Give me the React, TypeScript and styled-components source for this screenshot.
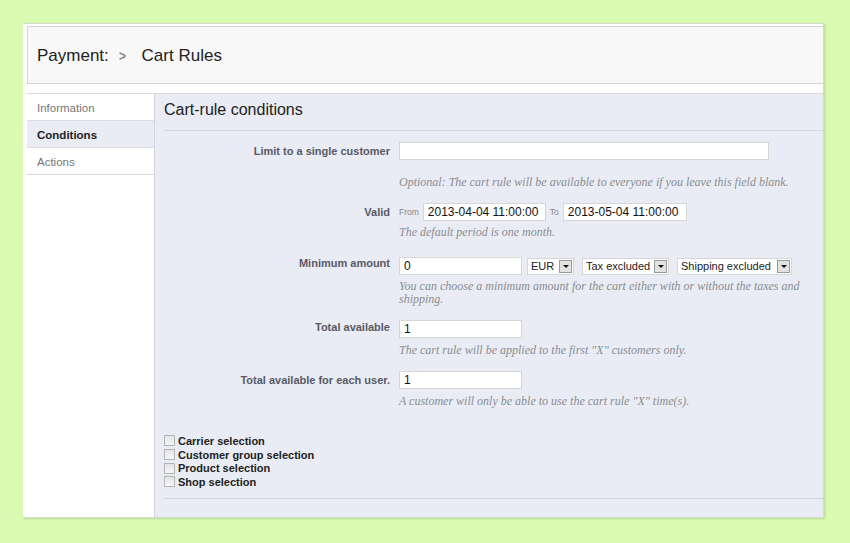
import styled, { createGlobalStyle } from "styled-components";

const GlobalStyle = createGlobalStyle`
  body {
    margin: 0;
    background: #d9fbb1;
    font-family: "Liberation Sans", Arial, sans-serif;
  }
`;

export default function App() {
  return (
    <>
      <GlobalStyle />
      <Page>
        <Card>
          <Header>
            <Crumb>Payment:</Crumb>
            <Chevron>&gt;</Chevron>
            <Crumb>Cart Rules</Crumb>
          </Header>
          <Body>
            <Tabs>
              <Tab>Information</Tab>
              <Tab $active>Conditions</Tab>
              <Tab>Actions</Tab>
            </Tabs>
            <Panel>
              <PanelTitle>Cart-rule conditions</PanelTitle>

              <FieldRow $top={11}>
                <Label>Limit to a single customer</Label>
                <Field>
                  <Controls>
                    <TextInput $width={370} />
                  </Controls>
                  <Hint $top={16}>
                    Optional: The cart rule will be available to everyone if you leave this field blank.
                  </Hint>
                </Field>
              </FieldRow>

              <FieldRow $top={14}>
                <Label>Valid</Label>
                <Field>
                  <Controls>
                    <Small>From</Small>
                    <TextInput $width={123} defaultValue="2013-04-04 11:00:00" />
                    <Small>To</Small>
                    <TextInput $width={124} defaultValue="2013-05-04 11:00:00" />
                  </Controls>
                  <Hint $top={5}>The default period is one month.</Hint>
                </Field>
              </FieldRow>

              <FieldRow $top={18}>
                <Label $lift={3}>Minimum amount</Label>
                <Field>
                  <Controls $gap={5}>
                    <TextInput $width={123} defaultValue="0" />
                    <Select $width={47}>EUR<DropButton /></Select>
                    <Select $width={87} $left={3}>Tax excluded<DropButton /></Select>
                    <Select $width={115} $left={3}>Shipping excluded<DropButton /></Select>
                  </Controls>
                  <Hint $top={5}>
                    You can choose a minimum amount for the cart either with or without the taxes and shipping.
                  </Hint>
                </Field>
              </FieldRow>

              <FieldRow $top={14}>
                <Label $lift={2}>Total available</Label>
                <Field>
                  <Controls>
                    <TextInput $width={123} defaultValue="1" />
                  </Controls>
                  <Hint $top={6}>The cart rule will be applied to the first "X" customers only.</Hint>
                </Field>
              </FieldRow>

              <FieldRow $top={14}>
                <Label>Total available for each user.</Label>
                <Field>
                  <Controls>
                    <TextInput $width={123} defaultValue="1" />
                  </Controls>
                  <Hint $top={6}>A customer will only be able to use the cart rule "X" time(s).</Hint>
                </Field>
              </FieldRow>

              <Checks>
                {["Carrier selection", "Customer group selection", "Product selection", "Shop selection"].map((t) => (
                  <CheckRow key={t}>
                    <Box />
                    {t}
                  </CheckRow>
                ))}
              </Checks>
              <BottomRule />
            </Panel>
          </Body>
        </Card>
      </Page>
    </>
  );
}

const Page = styled.div`
  width: 850px;
  height: 543px;
  padding: 23px 0 0 23px;
  box-sizing: border-box;
`;

const Card = styled.div`
  width: 801px;
  height: 495px;
  background: #fff;
  box-sizing: border-box;
  border: 1px solid #d4dccc;
  border-left: none;
  padding: 2px 0 0 4px;
  display: flex;
  flex-direction: column;
  box-shadow: 1px 1px 2px rgba(120, 150, 100, 0.35);
`;

const Header = styled.div`
  height: 58px;
  background: #f8f8f8;
  border: 1px solid #d3d3d3;
  border-right: none;
  display: flex;
  align-items: center;
  padding-left: 9px;
  padding-top: 1px;
  box-sizing: border-box;
`;

const Crumb = styled.span`
  font-size: 17px;
  color: #222;
`;

const Chevron = styled.span`
  font-size: 15px;
  font-weight: bold;
  color: #888;
  margin: 0 15px 0 9px;
  transform: scaleX(0.8);
`;

const Body = styled.div`
  flex: 1;
  display: flex;
  margin-top: 9px;
`;

const Tabs = styled.div`
  width: 127px;
  background: #fff;
  border-top: 1px solid #dcdcdc;
`;

const Tab = styled.div<{ $active?: boolean }>`
  height: 27px;
  box-sizing: border-box;
  border-bottom: 1px solid #dcdcdc;
  padding-left: 10px;
  padding-top: 1px;
  display: flex;
  align-items: center;
  font-size: 11.5px;
  color: ${(p) => (p.$active ? "#222" : "#777")};
  font-weight: ${(p) => (p.$active ? "bold" : "normal")};
  background: ${(p) => (p.$active ? "#e9ecf3" : "#fff")};
`;

const Panel = styled.div`
  flex: 1;
  background: #e9ecf4;
  border-left: 1px solid #d2d5dc;
  border-top: 1px solid #dcdcdc;
  display: flex;
  flex-direction: column;
`;

const PanelTitle = styled.div`
  font-size: 16px;
  color: #222;
  height: 37px;
  line-height: 32px;
  margin-left: 9px;
  border-bottom: 1px solid #d5d7dd;
  box-sizing: border-box;
`;

const FieldRow = styled.div<{ $top: number }>`
  display: grid;
  grid-template-columns: 235px 1fr;
  column-gap: 9px;
  margin-top: ${(p) => p.$top}px;
`;

const Label = styled.div<{ $lift?: number }>`
  height: 18px;
  line-height: 18px;
  margin-top: ${(p) => -(p.$lift ?? 0)}px;
  text-align: right;
  font-size: 11px;
  font-weight: bold;
  color: #585a66;
`;

const Field = styled.div`
  display: flex;
  flex-direction: column;
`;

const Controls = styled.div<{ $gap?: number }>`
  display: flex;
  align-items: center;
  gap: ${(p) => p.$gap ?? 4}px;
`;

const TextInput = styled.input<{ $width: number }>`
  width: ${(p) => p.$width}px;
  height: 18px;
  box-sizing: border-box;
  border: 1px solid #d6d6d6;
  background: #fff;
  padding: 0 4px;
  font-family: "Liberation Sans", Arial, sans-serif;
  font-size: 12px;
  color: #111;
  outline: none;
`;

const Small = styled.span`
  font-size: 8.5px;
  color: #888;
`;

const Select = styled.div<{ $width: number; $left?: number }>`
  width: ${(p) => p.$width}px;
  height: 17px;
  margin-left: ${(p) => p.$left ?? 0}px;
  box-sizing: border-box;
  border: 1px solid #d6d6d6;
  background: #fff;
  padding-left: 3px;
  display: flex;
  align-items: center;
  justify-content: space-between;
  white-space: nowrap;
  font-size: 11px;
  color: #222;
`;

const DropButton = styled.span`
  flex: none;
  width: 13px;
  height: 13px;
  margin-right: 1px;
  box-sizing: border-box;
  border: 1px solid #9a9a9a;
  background: #e2e2e2;
  position: relative;
  &::after {
    content: "";
    position: absolute;
    left: 3px;
    top: 4px;
    border-left: 3px solid transparent;
    border-right: 3px solid transparent;
    border-top: 3px solid #111;
  }
`;

const Hint = styled.div<{ $top?: number }>`
  margin-top: ${(p) => p.$top ?? 4}px;
  font-family: "Liberation Serif", "Times New Roman", serif;
  font-style: italic;
  font-size: 12px;
  line-height: 13px;
  color: #8a8c92;
  padding-right: 4px;
`;

const Checks = styled.div`
  margin: 26px 0 0 9px;
  display: flex;
  flex-direction: column;
`;

const CheckRow = styled.div`
  display: flex;
  align-items: center;
  gap: 3px;
  height: 13.7px;
  font-size: 11px;
  font-weight: bold;
  color: #222;
`;

const Box = styled.span`
  width: 11px;
  height: 11px;
  box-sizing: border-box;
  border: 1px solid #b4b4b4;
  background: linear-gradient(#e4e4e4, #f6f6f6);
`;

const BottomRule = styled.div`
  margin: 9px 0 0 9px;
  border-bottom: 1px solid #d2d4da;
`;
